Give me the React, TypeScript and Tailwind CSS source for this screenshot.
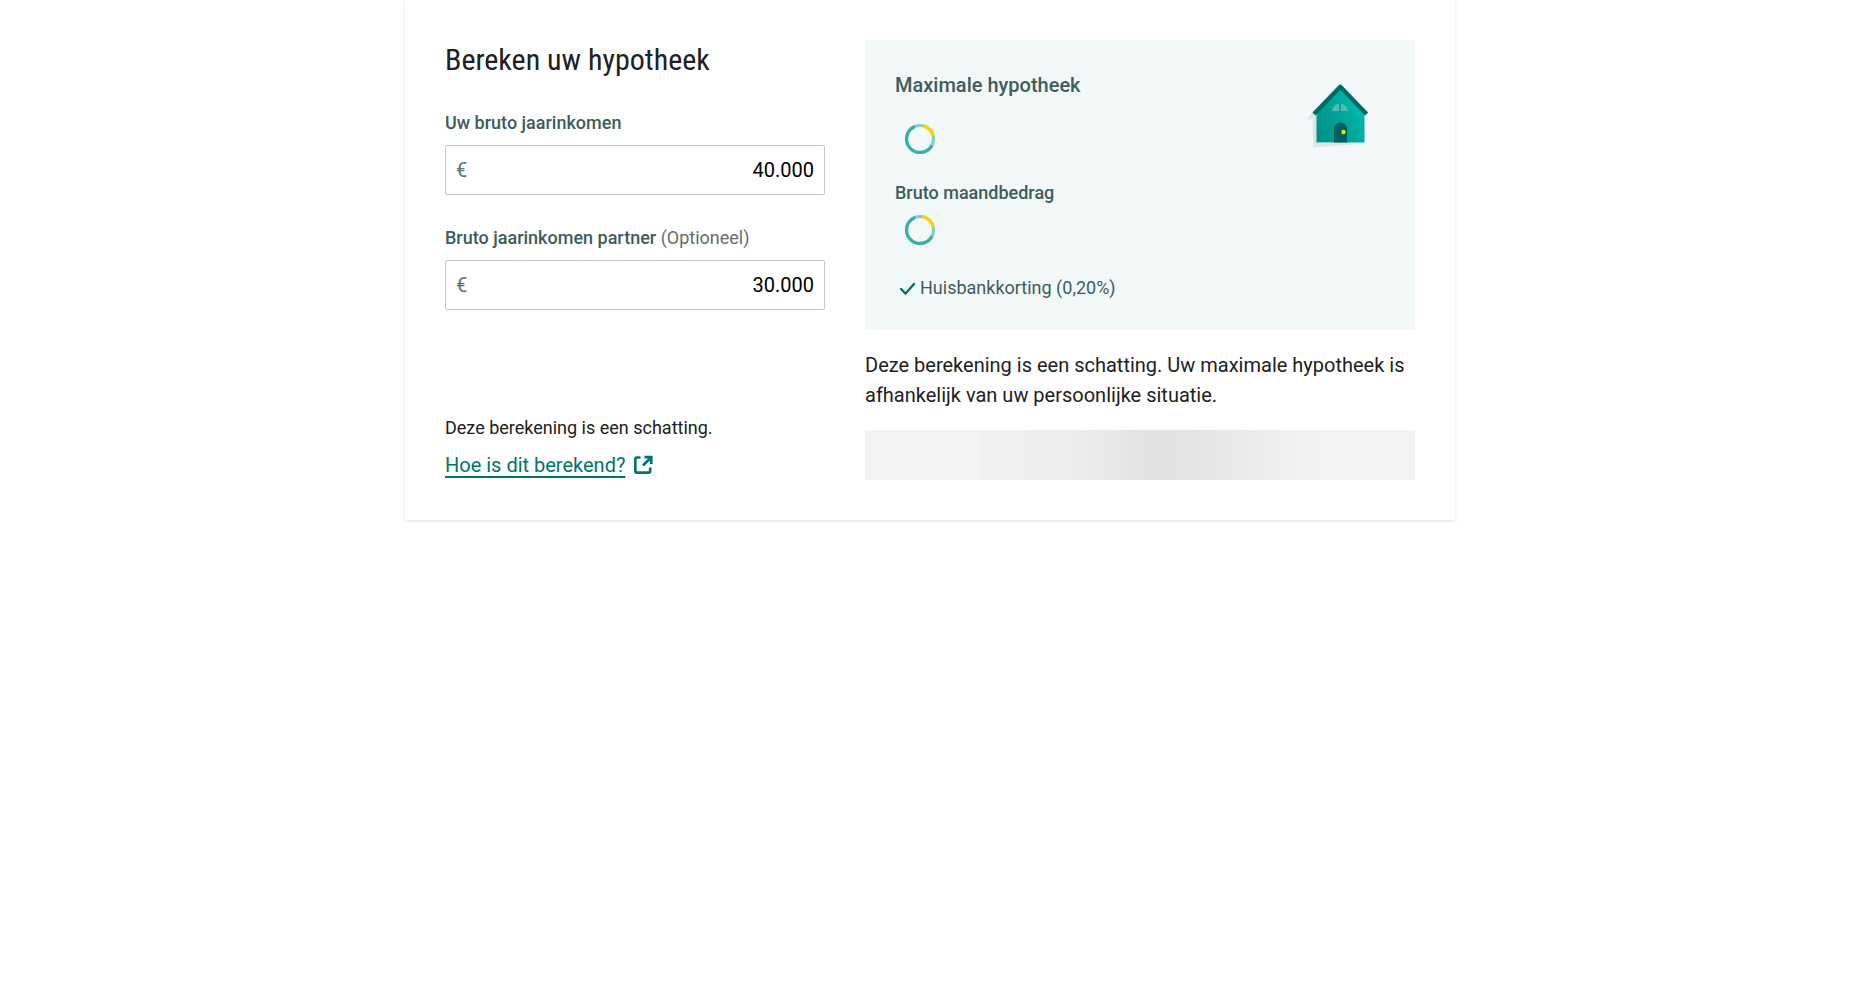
import { useState } from "react";

function Spinner() {
  return (
    <svg className="ml-[7px] size-9" viewBox="0 0 36 36" fill="none" strokeWidth="3.2" role="status" aria-label="Laden">
      <circle cx="18" cy="18" r="13.5" stroke="#82cfc9" />
      <path d="M30 24.2 A13.5 13.5 0 1 1 13 5.4" stroke="#3aaea5" />
      <path d="M21.9 5.1 A13.5 13.5 0 0 1 30.8 13.6" stroke="#ffd200" strokeLinecap="round" />
    </svg>
  );
}

function House() {
  return (
    <svg className="size-[76px]" viewBox="0 0 76 76" aria-hidden="true">
      <defs>
        <linearGradient id="wall" x1="0" y1="0.9" x2="1" y2="0.3">
          <stop offset="0" stopColor="#009286" />
          <stop offset="0.5" stopColor="#00a397" />
          <stop offset="1" stopColor="#00beb4" />
        </linearGradient>
      </defs>
      <path d="M34 11 L4.500 43 L5.500 45 L9.500 43 L10.500 72.500 L57 69 V40 Z" fill="#dfe4e6" />
      <path d="M37 13 L13.500 38 V67.500 H61.500 V38 Z" fill="url(#wall)" />
      <path d="M13.500 67.500 H61.500" stroke="#7fcfc9" />
      <path d="M11 39 L37.300 11.800 L63.600 39" fill="none" stroke="#006a66" strokeWidth="4.2" strokeLinejoin="round" />
      <path d="M29 36 A8 8 0 0 1 36 28.500 V36 Z M38 28.500 A8 8 0 0 1 45 36 H38 Z" fill="#4bbdb4" />
      <path d="M31 67.500 V54 A6.500 6.500 0 0 1 44 54 V67.500 Z" fill="#00605d" />
      <circle cx="40.500" cy="57" r="2.2" fill="#ffd200" />
    </svg>
  );
}

type AmountFieldProps = { id: string; label: string; hint?: string; initial: string };

function AmountField({ id, label, hint, initial }: AmountFieldProps) {
  const [value, setValue] = useState(initial);
  return (
    <div>
      <label htmlFor={id} className="block text-lg leading-6 font-medium text-[#3d5c5c]">
        {label}
        {hint && <span className="font-normal text-[#6b6b6b]"> {hint}</span>}
      </label>
      <div className="mt-[10px] flex h-[50px] items-center rounded-xs border border-[#c6c6c6] px-[10px]">
        <span className="text-xl text-[#5a7575]">€</span>
        <input
          id={id}
          inputMode="numeric"
          value={value}
          onChange={(e) => setValue(e.target.value)}
          className="min-w-0 flex-1 bg-transparent text-right text-xl text-black outline-none"
        />
      </div>
    </div>
  );
}

export default function App() {
  return (
    <div className="pb-10">
      <main className="mx-auto max-w-[1050px] bg-white p-10 font-['Roboto',sans-serif] text-[#212121] shadow-[0_1px_3px_rgba(0,0,0,0.12)]">
        <div className="grid grid-cols-1 gap-10 md:grid-cols-[380fr_550fr]">
          <form className="flex flex-col" onSubmit={(e) => e.preventDefault()}>
            <h1 className="mb-[31px] font-['Roboto_Condensed','Roboto',sans-serif] text-3xl leading-10 font-normal">
              Bereken uw hypotheek
            </h1>
            <div className="flex flex-col gap-[31px]">
              <AmountField id="income" label="Uw bruto jaarinkomen" initial="40.000" />
              <AmountField id="partner-income" label="Bruto jaarinkomen partner" hint="(Optioneel)" initial="30.000" />
            </div>
            <div className="mt-auto">
              <p className="mb-[10px] text-lg leading-6">Deze berekening is een schatting.</p>
              <a href="#berekening" className="flex items-center gap-2 text-xl leading-[30px] text-[#00756d]">
                <span className="underline decoration-2 underline-offset-4">Hoe is dit berekend?</span>
                <svg className="size-5" viewBox="0 0 20 20" fill="none" stroke="currentColor" strokeWidth="2.7" aria-hidden="true">
                  <path d="M7.500 2.500 H4 Q2.300 2.500 2.300 4.200 V16 Q2.300 17.700 4 17.700 H15.500 Q17.200 17.700 17.200 16 V12.500" />
                  <path d="M11.500 2.200 H18.300 V9 M18 2.500 L10 10.500" />
                </svg>
              </a>
            </div>
          </form>
          <section>
            <div className="flex items-start justify-between bg-[#f2f8f8] pt-[30px] pr-9 pb-[27px] pl-[30px] text-[#3d5c5c]">
              <div>
                <h2 className="text-xl leading-[30px] font-medium">Maximale hypotheek</h2>
                <div className="mt-[21px]"><Spinner /></div>
                <h3 className="mt-[23px] text-lg leading-[26px] font-medium">Bruto maandbedrag</h3>
                <div className="mt-[6px]"><Spinner /></div>
                <p className="mt-[25px] flex items-center text-lg leading-[30px]">
                  <svg className="size-[25px]" viewBox="0 0 25 25" fill="none" stroke="#00756d" strokeWidth="2.4" strokeLinecap="round" aria-hidden="true">
                    <path d="M6 13 L10.500 17.500 L19 8" />
                  </svg>
                  Huisbankkorting (0,20%)
                </p>
              </div>
              <div className="mt-[5px]"><House /></div>
            </div>
            <p className="my-5 text-xl leading-[30px]">
              Deze berekening is een schatting. Uw maximale hypotheek is afhankelijk van uw persoonlijke situatie.
            </p>
            <div
              role="progressbar"
              aria-label="Laden"
              className="h-[50px] bg-[linear-gradient(90deg,#f3f3f3_21%,#f0f0f0_21%,#eeeeee_36%,#e1e1e1_54%,#f3f3f3_82%)]"
            />
          </section>
        </div>
      </main>
    </div>
  );
}
